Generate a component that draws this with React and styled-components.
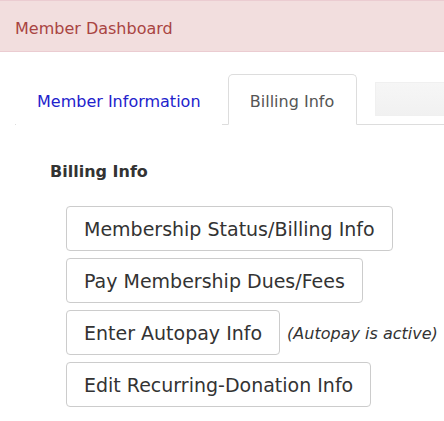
import React from "react";
import styled, { createGlobalStyle } from "styled-components";

const GlobalStyle = createGlobalStyle`
    html, body {
        margin: 0;
        padding: 0;
        background: #fff;
    }
    body {
        font-family: "DejaVu Sans", Verdana, sans-serif;
        color: #333;
    }
`;

const App = () => {
    return (
        <>
            <GlobalStyle />
            <Page>
                <Header>Member Dashboard</Header>
                <TabBar>
                    <Tab>Member Information</Tab>
                    <Tab $active>Billing Info</Tab>
                    <GhostTab />
                </TabBar>
                <Section>
                    <SectionTitle>Billing Info</SectionTitle>
                    <ButtonList>
                        <Row>
                            <ActionButton>Membership Status/Billing Info</ActionButton>
                        </Row>
                        <Row>
                            <ActionButton>Pay Membership Dues/Fees</ActionButton>
                        </Row>
                        <Row>
                            <ActionButton>Enter Autopay Info</ActionButton>
                            <Note>(Autopay is active)</Note>
                        </Row>
                        <Row>
                            <ActionButton>Edit Recurring-Donation Info</ActionButton>
                        </Row>
                    </ButtonList>
                </Section>
            </Page>
        </>
    );
};

export default App;

const Page = styled.div`
    width: 444px;
    height: 421px;
    overflow: hidden;
`;

const Header = styled.div`
    height: 46px;
    padding: 4px 0 0 15px;
    display: flex;
    align-items: center;
    background-color: #f2dede;
    border-top: 1px solid #ebccd1;
    border-bottom: 1px solid #ebccd1;
    color: #a94442;
    font-size: 16px;
    white-space: nowrap;
`;

const TabBar = styled.div`
    display: flex;
    align-items: flex-end;
    margin: 22px 0 0 15px;
    border-bottom: 1px solid #ddd;
    height: 50px;
`;

const Tab = styled.div`
    height: 51px;
    box-sizing: border-box;
    padding: 3px 20px 0;
    margin-bottom: -1px;
    margin-right: ${({ $active }) => ($active ? "18px" : "6px")};
    margin-left: ${({ $active }) => ($active ? "0" : "1px")};
    min-width: ${({ $active }) => ($active ? "129px" : "0")};
    font-size: 16px;
    line-height: 48px;
    text-align: center;
    white-space: nowrap;
    color: ${({ $active }) => ($active ? "#555" : "#2222cc")};
    background: #fff;
    border: 1px solid ${({ $active }) => ($active ? "#ddd" : "transparent")};
    border-bottom-color: ${({ $active }) => ($active ? "#fff" : "transparent")};
    border-radius: 5px 5px 0 0;
`;

const GhostTab = styled.div`
    flex: 1;
    height: 32px;
    margin-bottom: 8px;
    background: linear-gradient(to bottom, #f6f6f6, #f1f1f1);
    border: 1px solid #f0f0f0;
    border-right: none;
`;

const Section = styled.div`
    padding: 37px 0 0 50px;
`;

const SectionTitle = styled.div`
    font-weight: bold;
    font-size: 16px;
    line-height: 20px;
    color: #333;
`;

const ButtonList = styled.div`
    display: flex;
    flex-direction: column;
    gap: 7px;
    margin: 24px 0 0 16px;
`;

const Row = styled.div`
    display: flex;
    align-items: center;
    gap: 7px;
`;

const ActionButton = styled.button`
    font-family: "DejaVu Sans", Verdana, sans-serif;
    font-size: 19px;
    color: #333;
    background: #fff;
    border: 1px solid #ccc;
    border-radius: 4px;
    height: 45px;
    padding: 0 17px;
    white-space: nowrap;
    cursor: pointer;
`;

const Note = styled.span`
    font-style: italic;
    font-size: 16px;
    color: #333;
    white-space: nowrap;
    padding-top: 2px;
`;
